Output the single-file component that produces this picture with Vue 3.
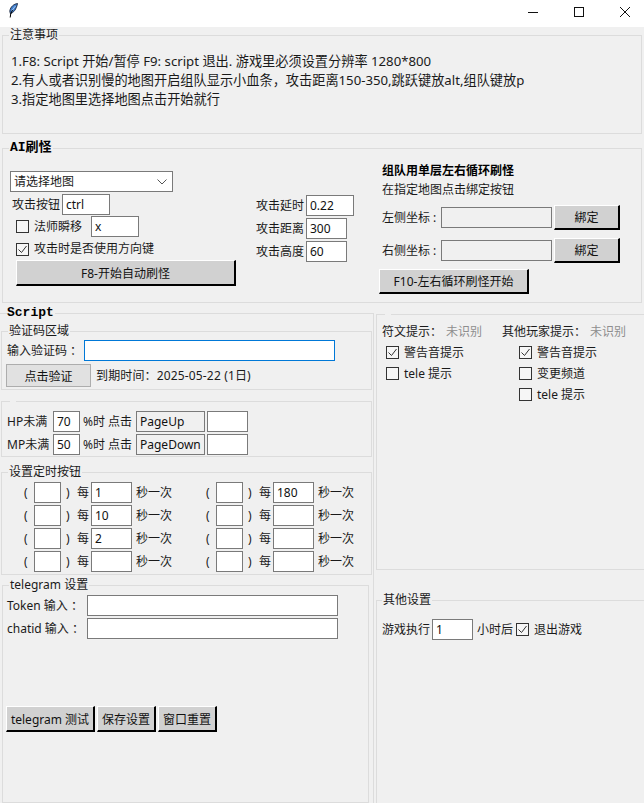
<script setup>
const timers = [
  ['', '1', '', '180'],
  ['', '10', '', ''],
  ['', '2', '', ''],
  ['', '', '', ''],
]
</script>

<template>
  <div class="win">
    <header class="titlebar">
      <svg class="feather" width="10" height="15" viewBox="0 0 10 15">
        <path d="M9.500 .5C6 1 2.500 3.500 1.800 8L2.300 10.500C5.500 10 8.500 6 9.500 .5Z" fill="#3f7fd0" stroke="#16243c" stroke-width=".9" />
        <path d="M7.500 3 3.500 8" stroke="#bcd6f4" stroke-width=".8" fill="none" />
        <path d="M4.500 7 2.700 11 2.200 14.500" stroke="#000" stroke-width="1" fill="none" />
      </svg>
      <div class="winbtns">
        <svg width="12" height="12" viewBox="0 0 12 12"><path d="M1 6.500h10" stroke="#111" fill="none" /></svg>
        <svg width="12" height="12" viewBox="0 0 12 12"><rect x="1.500" y="1.500" width="9" height="9" stroke="#111" fill="none" /></svg>
        <svg width="12" height="12" viewBox="0 0 12 12"><path d="M1 1l10 10M11 1 1 11" stroke="#111" fill="none" /></svg>
      </div>
    </header>

    <section class="group notes">
      <span class="legend notes-legend">注意事项</span>
      <p>1.F8: Script 开始/暂停 F9: script 退出. 游戏里必须设置分辨率 1280*800</p>
      <p>2.有人或者识别慢的地图开启组队显示小血条，攻击距离150-350,跳跃键放alt,组队键放p</p>
      <p>3.指定地图里选择地图点击开始就行</p>
    </section>

    <section class="group ai">
      <span class="legend heavy ai-legend">AI刷怪</span>
      <div class="ai-left">
        <div class="combo">
          <span>请选择地图</span>
          <svg width="10" height="6" viewBox="0 0 10 6"><path d="M.5.500 5 5 9.500.500" stroke="#555" fill="none" /></svg>
        </div>
        <div class="row key-row">
          <span class="lbl-key">攻击按钮</span>
          <input class="entry w48" value="ctrl" readonly />
        </div>
        <div class="row blink-row">
          <span class="box"></span>
          <span class="blink-lbl">法师瞬移</span>
          <input class="entry w48" value="x" readonly />
        </div>
        <div class="row arrow-row">
          <span class="box">
            <svg width="11" height="11" viewBox="0 0 11 11"><path d="M1.500 5.500 4.500 8.500 9.500 2" stroke="#333" fill="none" /></svg>
          </span>
          <span class="chk-lbl">攻击时是否使用方向键</span>
        </div>
        <button class="btn f8">F8-开始自动刷怪</button>
      </div>
      <div class="ai-mid">
        <div class="row mid-row"><span class="mid-lbl">攻击延时</span><input class="entry w48" value="0.22" readonly /></div>
        <div class="row mid-row"><span class="mid-lbl">攻击距离</span><input class="entry w41" value="300" readonly /></div>
        <div class="row mid-row"><span class="mid-lbl">攻击高度</span><input class="entry w41" value="60" readonly /></div>
      </div>
      <div class="ai-right">
        <div class="party-title">组队用单层左右循环刷怪</div>
        <div class="party-sub">在指定地图点击绑定按钮</div>
        <div class="row coord-row">
          <span class="coord-lbl">左侧坐标 :</span>
          <input class="entry coord-entry" readonly />
          <button class="btn bind">綁定</button>
        </div>
        <div class="row coord-row">
          <span class="coord-lbl">右侧坐标 :</span>
          <input class="entry coord-entry" readonly />
          <button class="btn bind">綁定</button>
        </div>
        <button class="btn f10">F10-左右循环刷怪开始</button>
      </div>
    </section>

    <div class="lower">
      <section class="script">
        <span class="legend heavy script-legend">Script</span>

        <div class="group verify">
          <span class="legend verify-legend">验证码区域</span>
          <div class="row code-row">
            <span class="code-lbl">输入验证码 ：</span>
            <input class="entry code-entry" readonly />
          </div>
          <div class="row check-row">
            <button class="ttk">点击验证</button>
            <span class="expire">到期时间：2025-05-22 (1日)</span>
          </div>
        </div>

        <div class="group potions">
          <span class="legend blank-legend"></span>
          <div class="row pot-row">
            <span class="pot-lbl">HP未满</span>
            <input class="entry w27" value="70" readonly />
            <span class="pot-mid">%时 点击</span>
            <input class="entry key-entry" value="PageUp" readonly />
            <input class="entry w41 pot-last" readonly />
          </div>
          <div class="row pot-row">
            <span class="pot-lbl">MP未满</span>
            <input class="entry w27" value="50" readonly />
            <span class="pot-mid">%时 点击</span>
            <input class="entry key-entry" value="PageDown" readonly />
            <input class="entry w41 pot-last" readonly />
          </div>
        </div>

        <div class="group timers">
          <span class="legend verify-legend">设置定时按钮</span>
          <div v-for="(t, i) in timers" :key="i" class="row timer-row">
            <div class="timer-cell">
              <span class="paren">(</span>
              <input class="entry w27" readonly />
              <span class="paren-close">)</span>
              <span class="every">每</span>
              <input class="entry w41" :value="t[1]" readonly />
              <span class="once">秒一次</span>
            </div>
            <div class="timer-cell">
              <span class="paren">(</span>
              <input class="entry w27" readonly />
              <span class="paren-close">)</span>
              <span class="every">每</span>
              <input class="entry w41" :value="t[3]" readonly />
              <span class="once">秒一次</span>
            </div>
          </div>
        </div>

        <div class="group telegram">
          <span class="legend verify-legend">telegram 设置</span>
          <div class="row tg-row">
            <span class="tg-lbl">Token 输入 ：</span>
            <input class="entry tg-entry" readonly />
          </div>
          <div class="row tg-row">
            <span class="tg-lbl">chatid 输入 ：</span>
            <input class="entry tg-entry" readonly />
          </div>
          <div class="row tg-btns">
            <button class="btn tg-test">telegram 测试</button>
            <button class="btn tg-save">保存设置</button>
            <button class="btn tg-save">窗口重置</button>
          </div>
        </div>
      </section>

      <aside class="side">
        <div class="group alerts">
          <span class="legend blank-legend"></span>
          <div class="row status-row">
            <span class="status-a">符文提示：</span><span class="muted status-b">未识别</span>
            <span class="status-c">其他玩家提示：</span><span class="muted">未识别</span>
          </div>
          <div class="alert-cols">
            <div class="alert-col col-a">
              <div class="row alert-row">
                <span class="box"><svg width="11" height="11" viewBox="0 0 11 11"><path d="M1.500 5.500 4.500 8.500 9.500 2" stroke="#333" fill="none" /></svg></span>
                <span class="chk-lbl">警告音提示</span>
              </div>
              <div class="row alert-row"><span class="box"></span><span class="chk-lbl">tele 提示</span></div>
            </div>
            <div class="alert-col col-b">
              <div class="row alert-row">
                <span class="box"><svg width="11" height="11" viewBox="0 0 11 11"><path d="M1.500 5.500 4.500 8.500 9.500 2" stroke="#333" fill="none" /></svg></span>
                <span class="chk-lbl">警告音提示</span>
              </div>
              <div class="row alert-row"><span class="box"></span><span class="chk-lbl">变更频道</span></div>
              <div class="row alert-row"><span class="box"></span><span class="chk-lbl">tele 提示</span></div>
            </div>
          </div>
        </div>

        <div class="group other">
          <span class="legend other-legend">其他设置</span>
          <div class="row quit-row">
            <span>游戏执行</span>
            <input class="entry w41 quit-entry" value="1" readonly />
            <span class="quit-hours">小时后</span>
            <span class="box"><svg width="11" height="11" viewBox="0 0 11 11"><path d="M1.500 5.500 4.500 8.500 9.500 2" stroke="#333" fill="none" /></svg></span>
            <span class="chk-lbl quit-lbl">退出游戏</span>
          </div>
        </div>
      </aside>
    </div>
  </div>
</template>

<style scoped>
.win {
  width: 644px;
  height: 803px;
  overflow: hidden;
  background: #f0f0f0;
  color: #1a1a1a;
  font: 12px/16px "Noto Sans", "Noto Sans CJK SC", sans-serif;
}
.titlebar {
  height: 27px;
  background: #fff;
  display: flex;
  align-items: center;
  justify-content: space-between;
}
.feather { margin: 0 0 6px 8px; }
.winbtns { display: flex; gap: 34px; padding-right: 13px; margin-top: -4px; }

.group {
  position: relative;
  box-sizing: border-box;
  border: 1px solid #dcdcdc;
}
.legend {
  position: absolute;
  background: #f0f0f0;
  white-space: nowrap;
  line-height: 14px;
}
.heavy {
  font: bold 13px/14px "Liberation Mono", "Noto Sans CJK SC", monospace;
  color: #000;
}
.row { display: flex; align-items: center; }
p { margin: 0; }

.entry {
  box-sizing: border-box;
  height: 21px;
  border: 1px solid #7a7a7a;
  background: #fff;
  padding: 0 3px;
  margin: 0;
  font: 12px "Noto Sans", "Noto Sans CJK SC", sans-serif;
  color: #111;
  outline: none;
  border-radius: 0;
}
.w48 { width: 48px; }
.w41 { width: 41px; }
.w27 { width: 27px; }

.btn {
  box-sizing: border-box;
  padding: 0;
  background: #d1d1d1;
  border: 2px solid;
  border-color: #fff #000 #000 #fff;
  border-width: 1px 2px 2px 1px;
  font: 12px "Noto Sans", "Noto Sans CJK SC", sans-serif;
  color: #111;
  height: 26px;
}
.box {
  box-sizing: border-box;
  flex: none;
  width: 13px;
  height: 13px;
  border: 1px solid #333;
  background: #f6f6f6;
  display: flex;
  align-items: center;
  justify-content: center;
}
.chk-lbl { margin-left: 5px; }
.muted { color: #8e8e8e; }

/* notes */
.notes {
  margin: 8px 2px 0;
  height: 99px;
  padding: 16px 8px 0;
  font-size: 13.2px;
  line-height: 19px;
}
.notes-legend { left: 6px; top: -8px; font-size: 12px; line-height: 14px; padding: 0 1px; }

/* AI */
.ai {
  margin: 14px 2px 0;
  height: 155px;
  display: flex;
}
.ai-legend { left: 6px; top: -8px; padding: 0 1px; }
.ai-left { width: 253px; padding: 22px 0 0 7px; box-sizing: border-box; }
.combo {
  box-sizing: border-box;
  width: 163px;
  height: 21px;
  border: 1px solid #7a7a7a;
  background: #fff;
  padding: 0 5px 0 3px;
  display: flex;
  align-items: center;
  justify-content: space-between;
}
.key-row { margin-top: 2px; padding-left: 2px; }
.lbl-key { width: 50px; }
.blink-row { margin-top: 1px; padding-left: 6px; }
.blink-lbl { margin-left: 5px; width: 57px; }
.arrow-row { margin-top: 2px; height: 20px; padding-left: 6px; }
.f8 { width: 220px; margin: 1px 0 0 6px; display: block; }

.ai-mid { width: 123px; box-sizing: border-box; padding-top: 46px; }
.mid-row { margin-bottom: 2px; }
.mid-lbl { width: 50px; }

.ai-right { flex: 1; padding-top: 13px; }
.party-title {
  margin-left: 3px;
  font: bold 12px/16px "Noto Sans CJK SC", sans-serif;
  color: #000;
}
.party-sub { margin: 4px 0 0 3px; }
.coord-row { margin: 0 0 0 3px; height: 25px; }
.ai-right .party-sub + .coord-row { margin-top: 7px; }
.coord-row + .coord-row { margin-top: 8px; }
.coord-lbl { width: 59px; }
.coord-entry { width: 111px; background: #f0f0f0; }
.bind { width: 66px; height: 25px; margin-left: 2px; }
.f10 { width: 150px; height: 25px; margin-top: 6px; display: block; }

/* lower */
.lower { display: flex; margin-top: 10px; height: 490px; }
.script {
  position: relative;
  box-sizing: border-box;
  width: 374px;
  height: 490px;
  border-top: 1px solid #dcdcdc;
  border-right: 1px solid #dcdcdc;
  padding-top: 17px;
}
.script-legend { left: 7px; top: -8px; padding-right: 1px; }
.verify { margin-left: 1px; width: 371px; height: 59px; }
.verify-legend { left: 6px; top: -8px; padding: 0 1px; }
.code-row { margin: 8px 0 0 5px; }
.code-lbl { width: 77px; }
.code-entry { width: 251px; border-color: #0078d7; }
.check-row { margin: 3px 0 0 4px; }
.ttk {
  box-sizing: border-box;
  width: 85px;
  height: 23px;
  padding: 0;
  background: #e1e1e1;
  border: 1px solid #adadad;
  font: 12px "Noto Sans", "Noto Sans CJK SC", sans-serif;
  color: #111;
}
.expire { margin-left: 5px; letter-spacing: .15px; }

.potions { margin: 11px 0 0 1px; width: 371px; height: 56px; padding-top: 9px; }
.blank-legend { left: 8px; top: -1px; width: 6px; height: 2px; }
.pot-row { margin: 0 0 2px 5px; }
.pot-lbl { width: 46px; }
.pot-mid { width: 53px; margin-left: 3px; }
.key-entry { width: 69px; background: #f0f0f0; }
.pot-last { margin-left: 2px; }

.timers { margin: 15px 0 0 1px; width: 371px; height: 103px; padding-top: 9px; }
.timer-row { margin-bottom: 2px; padding-left: 22px; }
.timer-cell { display: flex; flex: none; align-items: center; width: 182px; }
.paren { width: 10px; }
.paren-close { width: 11px; margin-left: 5px; }
.every { width: 14px; }
.once { margin-left: 4px; }

.telegram { margin: 10px 0 0 2px; width: 367px; height: 218px; padding-top: 9px; }
.tg-row { margin: 0 0 2px 4px; }
.tg-lbl { width: 80px; }
.tg-entry { width: 251px; }
.tg-btns { margin: 67px 0 0 3px; gap: 2px; }
.tg-test { width: 89px; }
.tg-save { width: 59px; }

/* side */
.side { margin-left: 2px; flex: 1; display: flex; flex-direction: column; }
.alerts {
  height: 256px;
  border-right: 0;
  margin-top: 1px;
  padding: 9px 0 0 5px;
}
.status-row { height: 16px; }
.status-a { width: 64px; }
.status-b { width: 56px; }
.status-c { width: 88px; }
.alert-cols { display: flex; margin-top: 2px; }
.alert-col { padding-left: 4px; }
.col-a { width: 133px; box-sizing: border-box; }
.alert-row { height: 21px; }

.other {
  margin-top: 30px;
  flex: 1;
  border-right: 0;
  border-bottom: 0;
}
.other-legend { left: 5px; top: -8px; padding: 0 1px; }
.quit-row { margin: 18px 0 0 5px; }
.quit-entry { margin-left: 2px; }
.quit-hours { margin: 0 3px 0 4px; }
</style>

<style>
html, body { margin: 0; background: #f0f0f0; overflow: hidden; }
</style>
